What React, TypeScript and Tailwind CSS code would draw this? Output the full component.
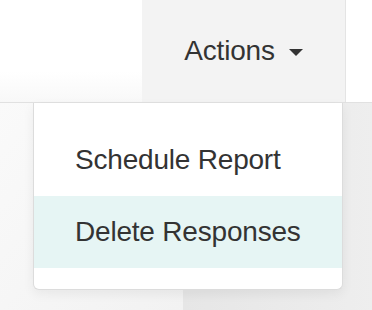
export default function App() {
  return (
    <div className="relative w-[372px] h-[310px] overflow-hidden bg-white font-['Liberation_Sans',Arial,sans-serif] text-[#333]">
      <header className="flex h-[103px] border-b border-[#e1e1e1]">
        <div className="w-[142px] bg-gradient-to-b from-white from-70% to-[#f8f8f8]" />
        <button className="w-[203px] flex items-center justify-center gap-[14px] bg-[#f3f3f3] text-[28px] leading-none">
          <span className="tracking-[-0.2px]">Actions</span>
          <span className="w-0 h-0 mt-[2px] border-x-[7px] border-t-[7px] border-x-transparent border-t-[#333]" />
        </button>
        <div className="flex-1 border-l border-[#e4e4e4] bg-white" />
      </header>

      <div className="flex h-[207px]">
        <div className="w-[183px] bg-gradient-to-br from-[#fafafa] to-[#f2f2f2]" />
        <div className="flex-1 bg-gradient-to-r from-[#e6e6e6] to-[#eeeeee]" />
      </div>

      <ul className="absolute left-[33px] top-[103px] w-[310px] py-[21px] bg-white border border-t-0 border-[#dcdcdc] rounded-b-[6px] shadow-[0_4px_12px_rgba(0,0,0,0.06)] text-[28px] leading-none tracking-[-0.2px]">
        <li className="h-[72px] flex items-center pl-[41px]">Schedule Report</li>
        <li className="h-[72px] flex items-center pl-[41px] bg-[#e6f5f4]">Delete Responses</li>
      </ul>
    </div>
  );
}
